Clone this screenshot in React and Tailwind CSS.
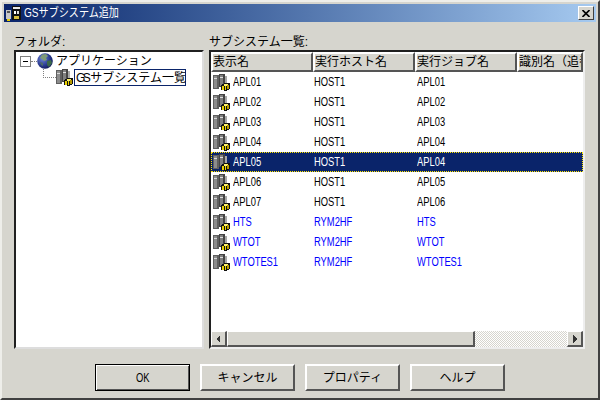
const jp = "font-['Liberation_Sans','Noto_Sans_CJK_JP',sans-serif]";

function ServerIcon() {
  return (
    <svg width="18" height="17" viewBox="0 0 18 17" className="shrink-0" shapeRendering="crispEdges">
      <rect x="0" y="1" width="6" height="14" fill="#5f5f5f" />
      <rect x="1" y="2" width="3" height="12" fill="#8c8c8c" />
      <rect x="1" y="4" width="3" height="1" fill="#d8d8d8" />
      <rect x="6" y="0" width="6" height="13" fill="#454545" />
      <rect x="7" y="1" width="3" height="11" fill="#808080" />
      <rect x="7" y="3" width="3" height="1" fill="#e0e0e0" />
      <rect x="12" y="2" width="2" height="8" fill="#a8a8a8" />
      <polygon points="8,11 12,9 17,9 17,15 13,17 8,16" fill="#111" />
      <polygon points="9,11 12,10 16,10 13,12" fill="#fff36a" />
      <rect x="9" y="12" width="4" height="4" fill="#e8d000" />
      <rect x="14" y="11" width="2" height="4" fill="#b89c00" />
      <rect x="11" y="12" width="1" height="4" fill="#111" />
    </svg>
  );
}

function Globe() {
  return (
    <svg width="16" height="16" viewBox="0 0 16 16" className="shrink-0">
      <defs>
        <radialGradient id="g" cx="35%" cy="35%" r="75%">
          <stop offset="0" stopColor="#6f86d8" />
          <stop offset="0.6" stopColor="#2a3a90" />
          <stop offset="1" stopColor="#0c1450" />
        </radialGradient>
      </defs>
      <circle cx="8" cy="8" r="7.8" fill="url(#g)" />
      <path d="M5 1.5 L9 1 L11 3 L9 5 L10 7 L7 8 L5 6 L3 5 Z" fill="#7f9a78" />
      <path d="M10 8 L14 7 L15 10 L12 14 L10 12 Z" fill="#3d6a4a" />
      <path d="M3 9 L6 10 L6 13 L4 12 Z" fill="#4c6a6a" />
    </svg>
  );
}

function TitleIcon() {
  return (
    <svg width="16" height="16" viewBox="0 0 16 16" className="shrink-0" shapeRendering="crispEdges">
      <rect x="0" y="5" width="5" height="9" fill="#c8c8c8" />
      <rect x="1" y="6" width="3" height="2" fill="#555" />
      <rect x="1" y="14" width="3" height="2" fill="#e8d000" />
      <rect x="6" y="1" width="9" height="14" fill="#111" />
      <rect x="7" y="2" width="7" height="2" fill="#e8e8e8" />
      <rect x="8" y="6" width="2" height="3" fill="#fff" />
      <rect x="11" y="6" width="2" height="3" fill="#ddd" />
      <rect x="8" y="11" width="5" height="3" fill="#d8c040" />
    </svg>
  );
}

function Triangle({ dir }) {
  return (
    <svg width="5" height="8" viewBox="0 0 5 8" shapeRendering="crispEdges">
      <polygon points={dir === "left" ? "4,0 4,8 0,4" : "1,0 1,8 5,4"} fill="#333" />
    </svg>
  );
}

const rows = [
  ["APL01", "HOST1", "APL01"],
  ["APL02", "HOST1", "APL02"],
  ["APL03", "HOST1", "APL03"],
  ["APL04", "HOST1", "APL04"],
  ["APL05", "HOST1", "APL04", "sel"],
  ["APL06", "HOST1", "APL05"],
  ["APL07", "HOST1", "APL06"],
  ["HTS", "RYM2HF", "HTS", "blue"],
  ["WTOT", "RYM2HF", "WTOT", "blue"],
  ["WTOTES1", "RYM2HF", "WTOTES1", "blue"],
];

function Latin({ children }) {
  return <span className="block origin-left scale-x-[0.78] text-[12px] leading-none whitespace-nowrap">{children}</span>;
}

function Header({ w, children }) {
  return (
    <div className={`${w} h-[20px] shrink-0 flex items-center overflow-hidden whitespace-nowrap bg-[#d6d5ce] border-t-2 border-l-2 border-t-white border-l-white border-r-2 border-b-2 border-r-[#555] border-b-[#555] text-[12px] text-black leading-none`}>
      {children}
    </div>
  );
}

function Btn({ children, def }) {
  return (
    <div className={`w-[95px] h-[27px] flex items-center justify-center text-[12px] text-black bg-[#d6d5ce] ${def ? "border border-black shadow-[inset_1px_1px_0_#fff,inset_-1px_-1px_0_#555]" : "border-t-2 border-l-2 border-t-white border-l-white border-r-2 border-b-2 border-r-[#555] border-b-[#555]"}`}>
      {children}
    </div>
  );
}

export default function App() {
  return (
    <div className={`w-[600px] h-[400px] flex flex-col overflow-hidden bg-[#d6d5ce] border-t-2 border-l-2 border-t-[#eeeeea] border-l-[#eeeeea] border-r-2 border-b-2 border-r-[#404040] border-b-[#404040] ${jp}`}>
      <div className="mx-[2px] mt-[2px] h-[18px] shrink-0 flex items-center bg-gradient-to-r from-[#0a246a] to-[#a6caf0] pl-[2px] pr-[2px]">
        <TitleIcon />
        <span className="ml-[2px] inline-block origin-left scale-x-[0.84] text-[12px] text-white whitespace-nowrap leading-none">GSサブシステム追加</span>
        <div className="ml-auto w-[16px] h-[14px] flex items-center justify-center bg-[#d6d5ce] border-t border-l border-t-white border-l-white border-r border-b border-r-[#404040] border-b-[#404040]">
          <svg width="8" height="7" viewBox="0 0 8 7">
            <path d="M0.5 0 L7.5 7 M7.5 0 L0.5 7" stroke="#000" strokeWidth="1.6" />
          </svg>
        </div>
      </div>

      <div className="flex mt-[13px] ml-[12px] gap-[5px]">
        <div className="w-[190px] flex flex-col">
          <div className="h-[15px] text-[12px] leading-[15px] text-black">フォルダ:</div>
          <div className="h-[299px] bg-white border-t-2 border-l-2 border-t-[#202020] border-l-[#202020] border-r-2 border-b-2 border-r-[#dddddd] border-b-[#dddddd] pt-[1px]">
            <div className="flex items-center h-[16px] ml-[4px]">
              <div className="w-[11px] h-[11px] border border-[#808080] flex items-center justify-center">
                <div className="w-[5px] h-[1px] bg-black" />
              </div>
              <div className="w-[6px] border-t border-dotted border-[#808080]" />
              <Globe />
              <span className="ml-[3px] text-[12px] leading-none text-black whitespace-nowrap">アプリケーション</span>
            </div>
            <div className="flex ml-[27px] h-[16px]">
              <div className="w-[13px] h-[9px] border-l border-b border-dotted border-[#808080]" />
              <ServerIcon />
              <div className="w-[112px] h-[17px] border border-[#0a246a] flex items-center pl-[1px] text-[12px] leading-none text-black whitespace-nowrap">
                <span className="tracking-[-2.5px] mr-[2px]">GS</span>サブシステム一覧
              </div>
            </div>
          </div>
        </div>

        <div className="w-[376px] flex flex-col">
          <div className="h-[15px] text-[12px] leading-[15px] text-black">サブシステム一覧:</div>
          <div className="h-[299px] flex flex-col bg-white border-t-2 border-l-2 border-t-[#202020] border-l-[#202020] border-r-2 border-b-2 border-r-[#eeeeee] border-b-[#eeeeee] overflow-hidden">
            <div className="flex shrink-0">
              <Header w="w-[102px]">表示名</Header>
              <Header w="w-[102px]">実行ホスト名</Header>
              <Header w="w-[102px]">実行ジョブ名</Header>
              <Header w="w-[66px]">識別名（追番</Header>
            </div>
            <div className="flex-1 flex flex-col">
              {rows.map((r) => {
                const sel = r[3] === "sel";
                const color = sel ? "text-white" : r[3] === "blue" ? "text-[#0000ff]" : "text-black";
                return (
                  <div key={r[0]} className={`h-[20px] shrink-0 flex items-center ${color} ${sel ? "bg-[#0a246a] outline outline-dotted -outline-offset-1 outline-[#ffe600]" : ""}`}>
                    <div className="w-[102px] shrink-0 flex items-center pl-[2px]">
                      <ServerIcon />
                      <div className="ml-[2px] w-[60px] mb-[1px]"><Latin>{r[0]}</Latin></div>
                    </div>
                    <div className="w-[102px] shrink-0 pl-[1px] mb-[1px]"><Latin>{r[1]}</Latin></div>
                    <div className="w-[102px] shrink-0 pl-[2px] mb-[1px]"><Latin>{r[2]}</Latin></div>
                  </div>
                );
              })}
            </div>
            <div className="h-[16px] shrink-0 flex">
              <div className="w-[16px] flex items-center justify-center bg-[#d6d5ce] border-t border-l border-t-white border-l-white border-r-2 border-b-2 border-r-[#555] border-b-[#555]"><Triangle dir="left" /></div>
              <div className="w-[248px] bg-[#d6d5ce] border-t border-l border-t-white border-l-white border-r-2 border-b-2 border-r-[#555] border-b-[#555]" />
              <div className="flex-1 bg-[repeating-conic-gradient(#ffffff_0_25%,#d6d5ce_0_50%)] bg-[length:2px_2px]" />
              <div className="w-[16px] flex items-center justify-center bg-[#d6d5ce] border-t border-l border-t-white border-l-white border-r-2 border-b-2 border-r-[#555] border-b-[#555]"><Triangle dir="right" /></div>
            </div>
          </div>
        </div>
      </div>

      <div className="flex mt-[15px] ml-[93px] gap-[10px]">
        <Btn def><span className="inline-block scale-x-[0.78] text-[12px] leading-none">OK</span></Btn>
        <Btn>キャンセル</Btn>
        <Btn>プロパティ</Btn>
        <Btn>ヘルプ</Btn>
      </div>
    </div>
  );
}
